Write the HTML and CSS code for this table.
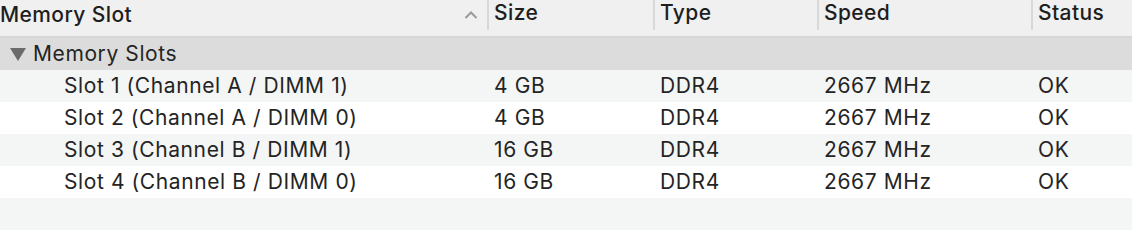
FILE: index.html
```html
<!DOCTYPE html>
<html>
<head>
<meta charset="utf-8">
<link rel="stylesheet" href="styles.css">
</head>
<body>
<div class="table">
  <div class="row header">
    <div class="cell first">Memory Slot
      <svg class="sort" width="14" height="8" viewBox="0 0 14 8"><path d="M1.5 7 L7 1.5 L12.5 7" fill="none" stroke="#9a9a9a" stroke-width="2"/></svg>
    </div>
    <div class="cell div">Size</div>
    <div class="cell div">Type</div>
    <div class="cell div">Speed</div>
    <div class="cell div">Status</div>
  </div>
  <div class="row group">
    <div class="cell group-cell"><svg class="tri" width="16" height="13" viewBox="0 0 16 13"><path d="M0 0 H16 L8 13 Z" fill="#6b6b6b"/></svg>Memory Slots</div>
  </div>
  <div class="row alt">
    <div class="cell first slot">Slot 1 (Channel A / DIMM 1)</div>
    <div class="cell">4 GB</div>
    <div class="cell">DDR4</div>
    <div class="cell">2667 MHz</div>
    <div class="cell">OK</div>
  </div>
  <div class="row">
    <div class="cell first slot">Slot 2 (Channel A / DIMM 0)</div>
    <div class="cell">4 GB</div>
    <div class="cell">DDR4</div>
    <div class="cell">2667 MHz</div>
    <div class="cell">OK</div>
  </div>
  <div class="row alt">
    <div class="cell first slot">Slot 3 (Channel B / DIMM 1)</div>
    <div class="cell">16 GB</div>
    <div class="cell">DDR4</div>
    <div class="cell">2667 MHz</div>
    <div class="cell">OK</div>
  </div>
  <div class="row">
    <div class="cell first slot">Slot 4 (Channel B / DIMM 0)</div>
    <div class="cell">16 GB</div>
    <div class="cell">DDR4</div>
    <div class="cell">2667 MHz</div>
    <div class="cell">OK</div>
  </div>
  <div class="row alt empty"></div>
</div>
</body>
</html>
```
FILE: styles.css
```css
html, body {
  margin: 0;
  padding: 0;
  background: #ffffff;
}
body {
  font-family: Inter, "Liberation Sans", sans-serif;
  font-size: 21px;
  letter-spacing: 0.6px;
  color: #242424;
  width: 1132px;
  height: 242px;
  overflow: hidden;
}
.table {
  display: flex;
  flex-direction: column;
}
.row {
  display: grid;
  grid-template-columns: 487px 166px 164px 214px 101px;
  height: 32px;
  line-height: 32px;
}
.row.alt {
  background: #f4f5f5;
}
.header {
  height: 36px;
  background: #f0f0f0;
  border-bottom: 2px solid #d6d6d6;
}
.header .cell {
  height: 30px;
  line-height: 26px;
  font-weight: 500;
  letter-spacing: 0.4px;
  color: #1e1e1e;
}
.header .first {
  display: flex;
  justify-content: space-between;
  align-items: center;
  padding-left: 3px;
  padding-right: 9px;
}
.sort {
  margin-top: 0;
}
.header .div {
  border-left: 2px solid #d8d8d8;
  padding-left: 5px;
}
.cell {
  padding-left: 7px;
  white-space: nowrap;
}
.cell.first {
  padding-left: 0;
}
.slot {
  padding-left: 64px !important;
}
.group {
  background: #dcdcdc;
  grid-template-columns: 1fr;
}
.group-cell {
  display: flex;
  align-items: center;
  padding-left: 10px;
  gap: 7px;
}
.tri {
  margin-top: 1px;
}
```
